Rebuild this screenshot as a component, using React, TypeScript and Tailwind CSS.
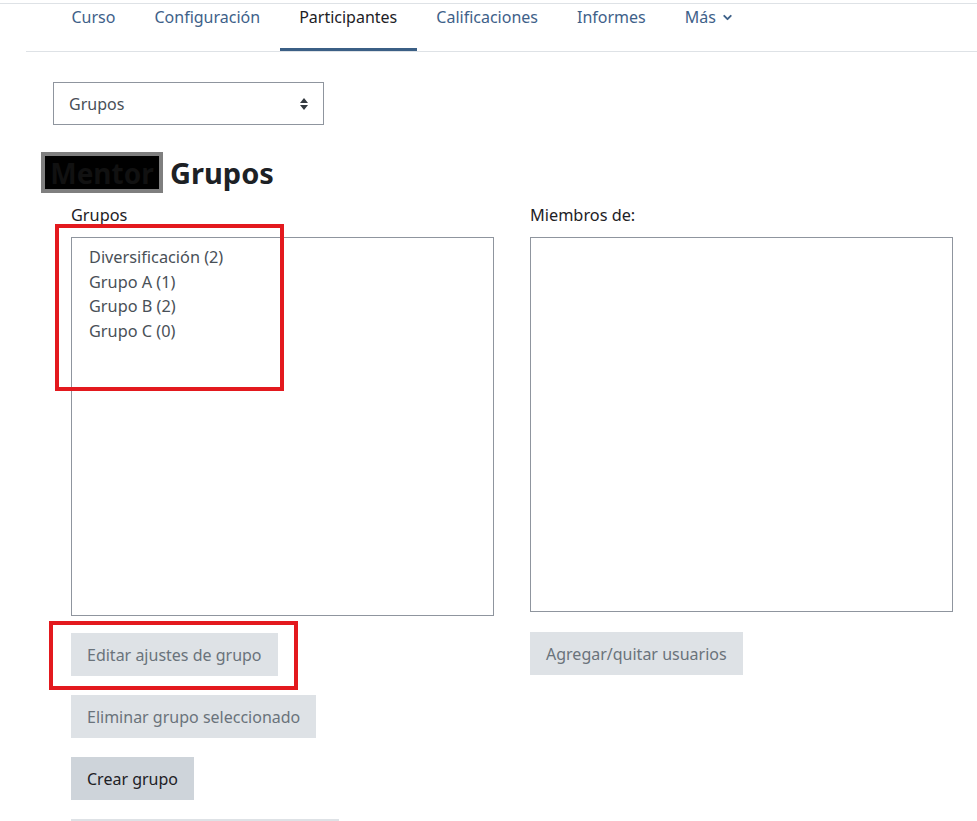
import { ChevronDown } from "lucide-react";

const tabs = ["Curso", "Configuración", "Participantes", "Calificaciones", "Informes"];
const groups = ["Diversificación (2)", "Grupo A (1)", "Grupo B (2)", "Grupo C (0)"];

function Btn({ label, disabled }: { label: string; disabled?: boolean }) {
  return (
    <button
      className={`h-[43px] px-[16px] text-[16px] ${
        disabled ? "bg-[#dee2e6] text-[#6a737b]" : "bg-[#ced4da] text-[#1d2125]"
      }`}
    >
      {label}
    </button>
  );
}

export default function App() {
  return (
    <div
      className="w-[977px] h-[821px] overflow-hidden bg-white text-[#1d2125]"
      style={{ fontFamily: '"Noto Sans", "Open Sans", sans-serif' }}
    >
      <div className="h-[4px] border-b border-[#dee2e6]" />

      {/* Secondary nav */}
      <div className="ml-[26px] flex h-[48px] border-b border-[#dee2e6] pl-[26px]">
        {tabs.map((t) => (
          <div
            key={t}
            className={`flex h-full items-start px-[19.5px] pt-[1px] text-[16px] ${
              t === "Participantes" ? "border-b-[3px] border-[#3b5f85] text-[#1d2125]" : "text-[#3e6189]"
            }`}
          >
            {t}
          </div>
        ))}
        <div className="flex h-full items-start gap-[5px] px-[19.5px] pt-[1px] text-[16px] text-[#3e6189]">
          Más
          <ChevronDown size={13} strokeWidth={3.5} className="mt-[6px]" />
        </div>
      </div>

      <div className="pl-[53px] pt-[30px]">
        <div className="flex h-[43px] w-[271px] items-center justify-between border border-[#8f959e] pl-[15px] pr-[14px] text-[16px] text-[#495057]">
          <span>Grupos</span>
          <svg width="10" height="14" viewBox="0 0 10 14">
            <path d="M5 1 L9 6 H1 Z M5 13 L1 8 H9 Z" fill="#343a40" />
          </svg>
        </div>

        <div className="-ml-[12px] mt-[27px] flex items-center gap-[7px]">
          <div className="flex h-[41px] w-[122px] items-center justify-center border-[4px] border-[#7f7f7f] bg-black text-[28px] font-bold text-[#111]">
            Mentor
          </div>
          <h2 className="text-[29px] font-bold leading-none text-[#1d2125]">Grupos</h2>
        </div>

        <div className="ml-[18px] mt-[11px] flex gap-[36px]">
          <div className="flex w-[423px] flex-col">
            <div className="text-[16.3px] leading-[22px] text-[#1d2125]">Grupos</div>
            <div className="relative mt-[11px] h-[379px] border border-[#8f959e] pl-[17px] pt-[7px] text-[16.3px] leading-[24.5px] text-[#495057]">
              {groups.map((g) => (
                <div key={g}>{g}</div>
              ))}
              <div className="absolute -left-[17px] -top-[14px] h-[167px] w-[229px] border-[4px] border-[#e3191e]" />
            </div>
            <div className="relative mt-[17px] flex flex-col items-start gap-[19px]">
              <Btn label="Editar ajustes de grupo" disabled />
              <div className="absolute -left-[22px] -top-[12px] h-[69px] w-[249px] border-[4px] border-[#e3191e]" />
              <Btn label="Eliminar grupo seleccionado" disabled />
              <Btn label="Crear grupo" />
              <Btn label="Crear grupos automáticamente" disabled />
            </div>
          </div>

          <div className="flex w-[423px] flex-col">
            <div className="text-[16.3px] leading-[22px] text-[#1d2125]">Miembros de:</div>
            <div className="mt-[11px] h-[375px] border border-[#8f959e]" />
            <div className="mt-[20px]">
              <Btn label="Agregar/quitar usuarios" disabled />
            </div>
          </div>
        </div>
      </div>
    </div>
  );
}
